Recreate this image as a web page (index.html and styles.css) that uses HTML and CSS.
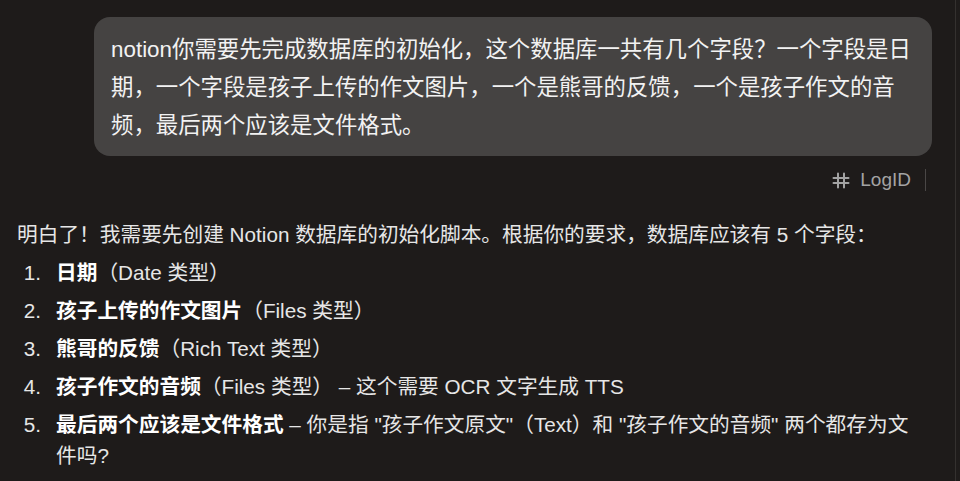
FILE: index.html
```html
<!DOCTYPE html>
<html lang="zh-CN">
<head>
<meta charset="utf-8">
<link rel="stylesheet" href="styles.css">
</head>
<body>
<div class="page">
  <div class="chat">
    <div class="user-row">
      <div class="bubble">notion你需要先完成数据库的初始化，这个数据库一共有几个字段？一个字段是日期，一个字段是孩子上传的作文图片，一个是熊哥的反馈，一个是孩子作文的音频，最后两个应该是文件格式。</div>
    </div>
    <div class="meta-row">
      <svg class="hash" viewBox="0 0 18 17" width="18" height="17" aria-hidden="true">
        <path d="M6 1.5V15.5M12 1.5V15.5M1.5 6H16.5M1.5 11H16.5" stroke="#a3a3a3" stroke-width="2" fill="none" stroke-linecap="round"/>
      </svg>
      <span class="logid">LogID</span>
      <span class="sep"></span>
    </div>
    <div class="answer">
      <p class="lead">明白了！我需要先创建 Notion 数据库的初始化脚本。根据你的要求，数据库应该有 5 个字段：</p>
      <ol class="fields">
        <li><span class="item"><strong>日期</strong>（Date 类型）</span></li>
        <li><span class="item"><strong>孩子上传的作文图片</strong>（Files 类型）</span></li>
        <li><span class="item"><strong>熊哥的反馈</strong>（Rich Text 类型）</span></li>
        <li><span class="item"><strong>孩子作文的音频</strong>（Files 类型） – 这个需要 OCR 文字生成 TTS</span></li>
        <li><span class="item"><strong>最后两个应该是文件格式</strong> – 你是指 "孩子作文原文"（Text）和 "孩子作文的音频" 两个都存为文件吗?</span></li>
      </ol>
    </div>
  </div>
  <div class="scroll-track"></div>
</div>
</body>
</html>
```

FILE: styles.css
```css
* {
  box-sizing: border-box;
}

html,
body {
  margin: 0;
  padding: 0;
  height: 100%;
  background: #1e1b1a;
  overflow: hidden;
}

body {
  font-family: "Liberation Sans", "Noto Sans CJK SC", sans-serif;
  color: #e6e6e6;
}

.page {
  display: flex;
  height: 481px;
}

.chat {
  flex: 1;
  padding: 17px 23px 0 17px;
  display: flex;
  flex-direction: column;
}

.user-row {
  display: flex;
  justify-content: flex-end;
}

.bubble {
  max-width: 838px;
  background: #454342;
  border-radius: 16px;
  padding: 14px 17px 11px 17px;
  font-size: 22.4px;
  line-height: 38px;
  color: #f2f2f2;
}

.meta-row {
  display: flex;
  justify-content: flex-end;
  align-items: center;
  height: 24px;
  margin-top: 12px;
  padding-right: 6px;
  color: #a3a3a3;
}

.hash {
  display: block;
  margin-right: 10px;
}

.logid {
  font-size: 19px;
  line-height: 24px;
}

.sep {
  width: 1px;
  height: 22px;
  background: #4a4746;
  margin-left: 14px;
}

.answer {
  margin-top: 27px;
  font-size: 20.7px;
  line-height: 31px;
  padding-right: 12px;
}

.lead {
  margin: 0;
}

.fields {
  list-style: none;
  margin: 7px 0 0 0;
  padding: 0;
  counter-reset: field;
}

.fields li {
  counter-increment: field;
  display: grid;
  grid-template-columns: 24px 1fr;
  column-gap: 15px;
  margin-top: 7px;
}

.fields li:first-child {
  margin-top: 0;
}

.fields li::before {
  content: counter(field) ".";
  text-align: right;
  color: #e6e6e6;
}

.fields strong {
  color: #ffffff;
  font-weight: 700;
}

.scroll-track {
  width: 5px;
  border-left: 1px solid #34312f;
  background: #1f1c1b;
}
```
